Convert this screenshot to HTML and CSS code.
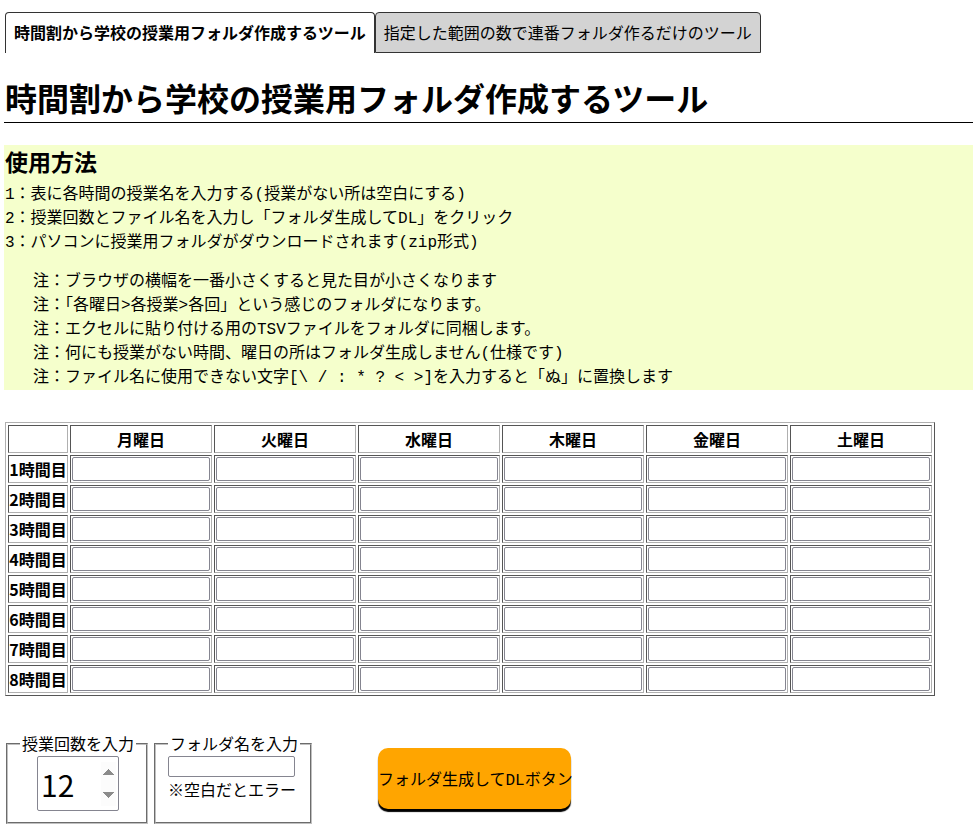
FILE: index.html
```html
<!DOCTYPE html>
<html lang="ja">
<head>
<meta charset="utf-8">
<title>時間割から学校の授業用フォルダ作成するツール</title>
<link rel="stylesheet" href="styles.css">
</head>
<body>
<div class="tabs">
  <div class="tab tab-active">時間割から学校の授業用フォルダ作成するツール</div>
  <div class="tab tab-inactive">指定した範囲の数で連番フォルダ作るだけのツール</div>
</div>

<h1 class="title">時間割から学校の授業用フォルダ作成するツール</h1>

<section class="usage">
  <h2 class="usage-title">使用方法</h2>
  <div class="steps">
    <div>1：表に各時間の授業名を入力する(授業がない所は空白にする)</div>
    <div>2：授業回数とファイル名を入力し「フォルダ生成してDL」をクリック</div>
    <div>3：パソコンに授業用フォルダがダウンロードされます(zip形式)</div>
  </div>
  <div class="notes">
    <div>注：ブラウザの横幅を一番小さくすると見た目が小さくなります</div>
    <div>注：「各曜日&gt;各授業&gt;各回」という感じのフォルダになります。</div>
    <div>注：エクセルに貼り付ける用のTSVファイルをフォルダに同梱します。</div>
    <div>注：何にも授業がない時間、曜日の所はフォルダ生成しません(仕様です)</div>
    <div>注：ファイル名に使用できない文字[\ / : * ? &lt; &gt;]を入力すると「ぬ」に置換します</div>
  </div>
</section>

<table class="timetable">
  <thead>
    <tr><th class="corner"></th><th>月曜日</th><th>火曜日</th><th>水曜日</th><th>木曜日</th><th>金曜日</th><th>土曜日</th></tr>
  </thead>
  <tbody>
    <tr><th class="period">1時間目</th><td><input class="cell-input" type="text"></td><td><input class="cell-input" type="text"></td><td><input class="cell-input" type="text"></td><td><input class="cell-input" type="text"></td><td><input class="cell-input" type="text"></td><td><input class="cell-input" type="text"></td></tr>
    <tr><th class="period">2時間目</th><td><input class="cell-input" type="text"></td><td><input class="cell-input" type="text"></td><td><input class="cell-input" type="text"></td><td><input class="cell-input" type="text"></td><td><input class="cell-input" type="text"></td><td><input class="cell-input" type="text"></td></tr>
    <tr><th class="period">3時間目</th><td><input class="cell-input" type="text"></td><td><input class="cell-input" type="text"></td><td><input class="cell-input" type="text"></td><td><input class="cell-input" type="text"></td><td><input class="cell-input" type="text"></td><td><input class="cell-input" type="text"></td></tr>
    <tr><th class="period">4時間目</th><td><input class="cell-input" type="text"></td><td><input class="cell-input" type="text"></td><td><input class="cell-input" type="text"></td><td><input class="cell-input" type="text"></td><td><input class="cell-input" type="text"></td><td><input class="cell-input" type="text"></td></tr>
    <tr><th class="period">5時間目</th><td><input class="cell-input" type="text"></td><td><input class="cell-input" type="text"></td><td><input class="cell-input" type="text"></td><td><input class="cell-input" type="text"></td><td><input class="cell-input" type="text"></td><td><input class="cell-input" type="text"></td></tr>
    <tr><th class="period">6時間目</th><td><input class="cell-input" type="text"></td><td><input class="cell-input" type="text"></td><td><input class="cell-input" type="text"></td><td><input class="cell-input" type="text"></td><td><input class="cell-input" type="text"></td><td><input class="cell-input" type="text"></td></tr>
    <tr><th class="period">7時間目</th><td><input class="cell-input" type="text"></td><td><input class="cell-input" type="text"></td><td><input class="cell-input" type="text"></td><td><input class="cell-input" type="text"></td><td><input class="cell-input" type="text"></td><td><input class="cell-input" type="text"></td></tr>
    <tr><th class="period">8時間目</th><td><input class="cell-input" type="text"></td><td><input class="cell-input" type="text"></td><td><input class="cell-input" type="text"></td><td><input class="cell-input" type="text"></td><td><input class="cell-input" type="text"></td><td><input class="cell-input" type="text"></td></tr>
  </tbody>
</table>

<div class="controls">
  <fieldset class="box box-count">
    <legend>授業回数を入力</legend>
    <input class="count-input" type="number" value="12">
  </fieldset>
  <fieldset class="box box-name">
    <legend>フォルダ名を入力</legend>
    <input class="name-input" type="text">
    <div class="hint">※空白だとエラー</div>
  </fieldset>
  <button class="dl-button" type="button">フォルダ生成してDLボタン</button>
</div>
</body>
</html>
```

FILE: styles.css
```css
html, body {
  background: #ffffff;
}
body {
  margin: 0 0 0 4px;
  color: #000;
  font-family: "Noto Sans CJK JP", sans-serif;
  font-size: 16px;
}

.tabs {
  display: flex;
  margin-top: 12px;
  margin-left: 1px;
}
.tab {
  font-size: 16px;
  line-height: 23px;
  padding: 8px 8px;
  border: 1px solid #333;
  border-radius: 4px 4px 0 0;
  white-space: nowrap;
}
.tab-active {
  font-weight: bold;
  background: #fff;
  border-bottom: none;
  padding-bottom: 9px;
}
.tab-inactive {
  background: #d3d3d3;
}

.title {
  margin: 24px 0 0 0;
  font-size: 32px;
  line-height: 40px;
  font-weight: bold;
  padding: 0 0 5px 1px;
  border-bottom: 1px solid #000;
}

.usage {
  margin-top: 22px;
  background: #f5ffcc;
  padding: 0 0 0 1px;
}
.usage-title {
  margin: 0;
  font-size: 23px;
  line-height: 33px;
  font-weight: bold;
}
.steps {
  margin-top: 5px;
  font-family: "Liberation Mono", "Noto Sans CJK JP", monospace;
  font-size: 16px;
  line-height: 24px;
}
.notes {
  margin-top: 15px;
  padding-left: 28px;
  font-family: "Liberation Mono", "Noto Sans CJK JP", monospace;
  font-size: 16px;
  line-height: 24px;
}

.timetable {
  margin-top: 32px;
  margin-left: 1px;
  border-collapse: separate;
  border-spacing: 2px;
  border-top: 1px solid #b0b0b0;
  border-left: 1px solid #b0b0b0;
  border-right: 1px solid #555;
  border-bottom: 1px solid #555;
}
.timetable th,
.timetable td {
  padding: 1px;
  border-top: 1px solid #555;
  border-left: 1px solid #555;
  border-right: 1px solid #b0b0b0;
  border-bottom: 1px solid #b0b0b0;
}
.timetable th {
  font-size: 16px;
  font-weight: bold;
  height: 24px;
  line-height: 22px;
  text-align: center;
}
.timetable .corner {
  width: 56px;
}
.timetable .period {
  padding: 1px 0;
  white-space: nowrap;
}
.cell-input {
  display: block;
  box-sizing: border-box;
  width: 138px;
  height: 24px;
  margin: 0;
  border: 1px solid #858590;
  border-radius: 2px;
  background: #fff;
}

.controls {
  margin-top: 36px;
  display: flex;
  align-items: stretch;
}
.box {
  margin: 0;
  border: 2px groove #c0c0c0;
  padding: 1px 12px 11px 12px;
  font-size: 16px;
  box-sizing: border-box;
  min-width: 0;
}
.box legend {
  padding: 0 2px;
  line-height: 23px;
  white-space: nowrap;
}
.box-count {
  margin-left: 2px;
  width: 142px;
  text-align: center;
}
.box-name {
  margin-left: 6px;
  width: 158px;
}
.count-input {
  box-sizing: border-box;
  width: 82px;
  height: 55px;
  margin: 0 0 0 2px;
  padding: 0 2px 0 3px;
  font-family: "Noto Sans CJK JP", sans-serif;
  font-size: 30px;
  border: 1px solid #858590;
  border-radius: 2px;
  vertical-align: top;
}
.count-input::-webkit-inner-spin-button {
  opacity: 1;
}
.name-input {
  display: block;
  box-sizing: border-box;
  width: 127px;
  height: 21px;
  margin: 0;
  border: 1px solid #858590;
  border-radius: 2px;
}
.hint {
  line-height: 23px;
  margin-top: 1px;
  white-space: nowrap;
}
.dl-button {
  align-self: center;
  margin: 0 0 0 66px;
  width: 193px;
  height: 61px;
  padding: 0;
  border: none;
  border-radius: 10px;
  background: #ffa500;
  color: #000;
  box-shadow: 0 3px 1px #000;
  font-family: "Liberation Mono", "Noto Sans CJK JP", monospace;
  font-size: 16px;
  white-space: nowrap;
}
```
